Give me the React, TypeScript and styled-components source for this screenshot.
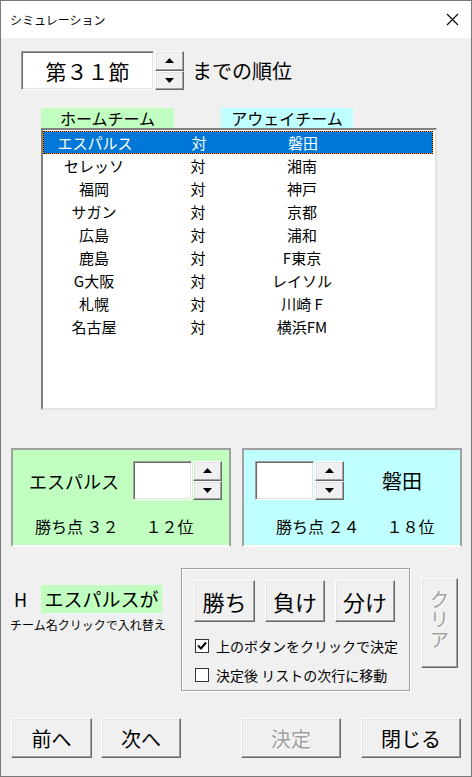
import React from "react";
import styled, { createGlobalStyle, css } from "styled-components";

const Global = createGlobalStyle`
  html, body { margin: 0; padding: 0; background: #f0f0f0; }
  * { box-sizing: border-box; }
  body { font-family: "Noto Sans CJK JP", "Noto Sans", sans-serif; color: #000; }
`;

const raised = css`
  border: 1px solid;
  border-color: #ffffff #696969 #696969 #ffffff;
  box-shadow: inset -1px -1px #a0a0a0, inset 1px 1px #e3e3e3;
  background: #f0f0f0;
`;

const sunken = css`
  border: 1px solid;
  border-color: #a0a0a0 #ffffff #ffffff #a0a0a0;
  box-shadow: inset 1px 1px #696969, inset -1px -1px #e3e3e3;
  background: #ffffff;
`;

const Window = styled.div`
  width: 472px;
  height: 777px;
  border: 1px solid #7a7a7a;
  background: #f0f0f0;
  display: flex;
  flex-direction: column;
  overflow: hidden;
`;

const TitleBar = styled.div`
  height: 37px;
  background: #ffffff;
  display: flex;
  align-items: center;
  justify-content: space-between;
  padding: 0 12px 0 9px;
  font-size: 12px;
  flex-shrink: 0;
`;

const Body = styled.div`
  display: flex;
  flex-direction: column;
`;

const TopRow = styled.div`
  margin: 13px 0 0 20px;
  display: flex;
  align-items: center;
  height: 39px;
`;

const SpinField = styled.div<{ $w: number; $h: number; $size?: number }>`
  ${sunken};
  width: ${(p) => p.$w}px;
  height: ${(p) => p.$h}px;
  display: flex;
  align-items: center;
  justify-content: center;
  font-size: ${(p) => p.$size ?? 20}px;
  white-space: nowrap;
`;

const SpinCol = styled.div`
  display: flex;
  flex-direction: column;
  width: 29px;
  height: 39px;
  margin-left: 1px;
`;

const SpinBtn = styled.div`
  ${raised};
  flex: 1;
  display: flex;
  align-items: center;
  justify-content: center;
`;

const Tri = ({ down }: { down?: boolean }) => (
  <svg width="9" height="5" viewBox="0 0 9 5">
    <polygon points={down ? "0,0 9,0 4.5,5" : "0,5 9,5 4.5,0"} fill="#000" />
  </svg>
);

const Spin = () => (
  <SpinCol>
    <SpinBtn><Tri /></SpinBtn>
    <SpinBtn><Tri down /></SpinBtn>
  </SpinCol>
);

const BigLabel = styled.span`
  font-size: 20px;
  margin-left: 8px;
`;

const HeaderRow = styled.div`
  margin: 18px 0 0 40px;
  display: flex;
  gap: 47px;
  height: 20px;
`;

const HeadLabel = styled.div<{ $bg: string; $w: number }>`
  width: ${(p) => p.$w}px;
  background: ${(p) => p.$bg};
  font-size: 16px;
  line-height: 20px;
  text-align: center;
`;

const ListBox = styled.div`
  margin-left: 40px;
  width: 396px;
  height: 282px;
  border: 2px solid;
  border-color: #808080 #e3e3e3 #e3e3e3 #808080;
  background: #fff;
  padding: 1px 2px 0 0;
  display: flex;
  flex-direction: column;
`;

const ListRow = styled.div<{ $sel?: boolean }>`
  display: grid;
  grid-template-columns: 102px 106px 102px 1fr;
  height: 23px;
  align-items: center;
  font-size: 15px;
  ${(p) =>
    p.$sel &&
    css`
      background: #0078d7;
      color: #fff;
      border: 1px solid #ff9a1e;
      outline: 1px dotted #000;
      outline-offset: -1px;
    `}
`;

const Cell = styled.span`
  text-align: center;
  white-space: nowrap;
`;

const PanelRow = styled.div`
  margin: 38px 0 0 10px;
  display: flex;
  gap: 11px;
`;

const Panel = styled.div<{ $bg: string }>`
  width: 220px;
  height: 99px;
  background: ${(p) => p.$bg};
  border: 2px solid;
  border-color: #a0a0a0 #a0a0a0 #ffffff #a0a0a0;
  display: flex;
  flex-direction: column;
  padding-top: 11px;
`;

const PanelTop = styled.div<{ $cols: string; $pl: number }>`
  display: grid;
  grid-template-columns: ${(p) => p.$cols};
  align-items: center;
  padding-left: ${(p) => p.$pl}px;
  height: 39px;
`;

const TeamName = styled.span<{ $center?: boolean; $size: number }>`
  font-size: ${(p) => p.$size}px;
  text-align: ${(p) => (p.$center ? "center" : "left")};
  white-space: nowrap;
`;

const Stats = styled.div<{ $pl: number; $gap: number }>`
  margin-top: 16px;
  padding-left: ${(p) => p.$pl}px;
  display: flex;
  gap: ${(p) => p.$gap}px;
  font-size: 16px;
  line-height: 20px;
  white-space: nowrap;
`;

const SpinGroup = styled.div`
  display: flex;
`;

const Lower = styled.div`
  margin: 21px 0 0 0;
  height: 123px;
  display: flex;
`;

const LeftCol = styled.div`
  width: 180px;
  padding: 17px 0 0 9px;
  display: flex;
  flex-direction: column;
`;

const WhoRow = styled.div`
  display: flex;
  align-items: center;
  height: 28px;
`;

const HLetter = styled.span`
  font-size: 18px;
  width: 31px;
  padding-left: 4px;
`;

const GreenTag = styled.span`
  background: #c0ffc0;
  font-size: 19px;
  height: 28px;
  line-height: 28px;
  width: 121px;
  text-align: center;
  white-space: nowrap;
`;

const Hint = styled.span`
  margin-top: 3px;
  font-size: 12px;
  white-space: nowrap;
`;

const GroupBox = styled.div`
  width: 229px;
  height: 123px;
  border: 1px solid #a0a0a0;
  box-shadow: inset 1px 1px #fff, 1px 1px #fff;
  padding: 11px 0 0 12px;
  display: flex;
  flex-direction: column;
`;

const ResultRow = styled.div`
  display: flex;
  gap: 10px;
`;

const Btn = styled.div<{ $w: number; $h: number; $size: number; $disabled?: boolean }>`
  ${raised};
  width: ${(p) => p.$w}px;
  height: ${(p) => p.$h}px;
  font-size: ${(p) => p.$size}px;
  display: flex;
  align-items: center;
  justify-content: center;
  white-space: nowrap;
  color: ${(p) => (p.$disabled ? "#a0a0a0" : "#000")};
  text-shadow: ${(p) => (p.$disabled ? "1px 1px #fff" : "none")};
`;

const CheckRow = styled.div<{ $mt: number }>`
  display: flex;
  align-items: center;
  gap: 7px;
  margin-top: ${(p) => p.$mt}px;
  padding-left: 1px;
  font-size: 14px;
  height: 15px;
  white-space: nowrap;
`;

const Box = styled.div`
  width: 14px;
  height: 14px;
  border: 1px solid #333;
  background: #fff;
  display: flex;
  align-items: center;
  justify-content: center;
`;

const ClearWrap = styled.div`
  margin: 10px 0 0 11px;
`;

const ClearBtn = styled(Btn)`
  align-items: flex-start;
  padding-top: 10px;
`;

const ClearText = styled.span`
  display: block;
  width: 19px;
  line-height: 20px;
  font-size: 19px;
  white-space: normal;
  word-break: break-all;
`;

const BottomRow = styled.div`
  margin: 27px 0 0 10px;
  display: flex;
  height: 40px;
`;

const Spacer = styled.div<{ $w: number }>`
  width: ${(p) => p.$w}px;
`;

const rows: [string, string][] = [
  ["エスパルス", "磐田"],
  ["セレッソ", "湘南"],
  ["福岡", "神戸"],
  ["サガン", "京都"],
  ["広島", "浦和"],
  ["鹿島", "F東京"],
  ["G大阪", "レイソル"],
  ["札幌", "川崎 F"],
  ["名古屋", "横浜FM"],
];

export default function App() {
  return (
    <>
      <Global />
      <Window>
        <TitleBar>
          <span>シミュレーション</span>
          <svg width="13" height="13" viewBox="0 0 13 13">
            <path d="M1 1 L12 12 M12 1 L1 12" stroke="#000" strokeWidth="1.1" />
          </svg>
        </TitleBar>
        <Body>
          <TopRow>
            <SpinField $w={133} $h={39} $size={21}>第３１節</SpinField>
            <Spin />
            <BigLabel>までの順位</BigLabel>
          </TopRow>
          <HeaderRow>
            <HeadLabel $bg="#c0ffc0" $w={133}>ホームチーム</HeadLabel>
            <HeadLabel $bg="#c0ffff" $w={132}>アウェイチーム</HeadLabel>
          </HeaderRow>
          <ListBox>
            {rows.map(([h, a], i) => (
              <ListRow key={i} $sel={i === 0}>
                <Cell>{h}</Cell>
                <Cell>対</Cell>
                <Cell>{a}</Cell>
                <span />
              </ListRow>
            ))}
          </ListBox>
          <PanelRow>
            <Panel $bg="#c0ffc0">
              <PanelTop $cols="104px auto" $pl={16}>
                <TeamName $size={18}>エスパルス</TeamName>
                <SpinGroup>
                  <SpinField $w={59} $h={39} />
                  <Spin />
                </SpinGroup>
              </PanelTop>
              <Stats $pl={22} $gap={27}>
                <span>勝ち点 ３２</span>
                <span>１２位</span>
              </Stats>
            </Panel>
            <Panel $bg="#c0ffff">
              <PanelTop $cols="auto 1fr" $pl={11}>
                <SpinGroup>
                  <SpinField $w={59} $h={39} />
                  <Spin />
                </SpinGroup>
                <TeamName $center $size={20}>磐田</TeamName>
              </PanelTop>
              <Stats $pl={32} $gap={27}>
                <span>勝ち点 ２４</span>
                <span>１８位</span>
              </Stats>
            </Panel>
          </PanelRow>
          <Lower>
            <LeftCol>
              <WhoRow>
                <HLetter>H</HLetter>
                <GreenTag>エスパルスが</GreenTag>
              </WhoRow>
              <Hint>チーム名クリックで入れ替え</Hint>
            </LeftCol>
            <GroupBox>
              <ResultRow>
                <Btn $w={61} $h={42} $size={22}>勝ち</Btn>
                <Btn $w={60} $h={42} $size={22}>負け</Btn>
                <Btn $w={60} $h={42} $size={22}>分け</Btn>
              </ResultRow>
              <CheckRow $mt={16}>
                <Box>
                  <svg width="10" height="9" viewBox="0 0 10 9">
                    <path d="M1 4.5 L4 7.5 L9 1.5" stroke="#000" strokeWidth="2" fill="none" />
                  </svg>
                </Box>
                <span>上のボタンをクリックで決定</span>
              </CheckRow>
              <CheckRow $mt={14}>
                <Box />
                <span>決定後 リストの次行に移動</span>
              </CheckRow>
            </GroupBox>
            <ClearWrap>
              <ClearBtn $w={37} $h={90} $size={19} $disabled>
                <ClearText>クリア</ClearText>
              </ClearBtn>
            </ClearWrap>
          </Lower>
          <BottomRow>
            <Btn $w={81} $h={40} $size={20}>前へ</Btn>
            <Spacer $w={9} />
            <Btn $w={80} $h={40} $size={20}>次へ</Btn>
            <Spacer $w={60} />
            <Btn $w={100} $h={40} $size={20} $disabled>決定</Btn>
            <Spacer $w={20} />
            <Btn $w={100} $h={40} $size={20}>閉じる</Btn>
          </BottomRow>
        </Body>
      </Window>
    </>
  );
}
